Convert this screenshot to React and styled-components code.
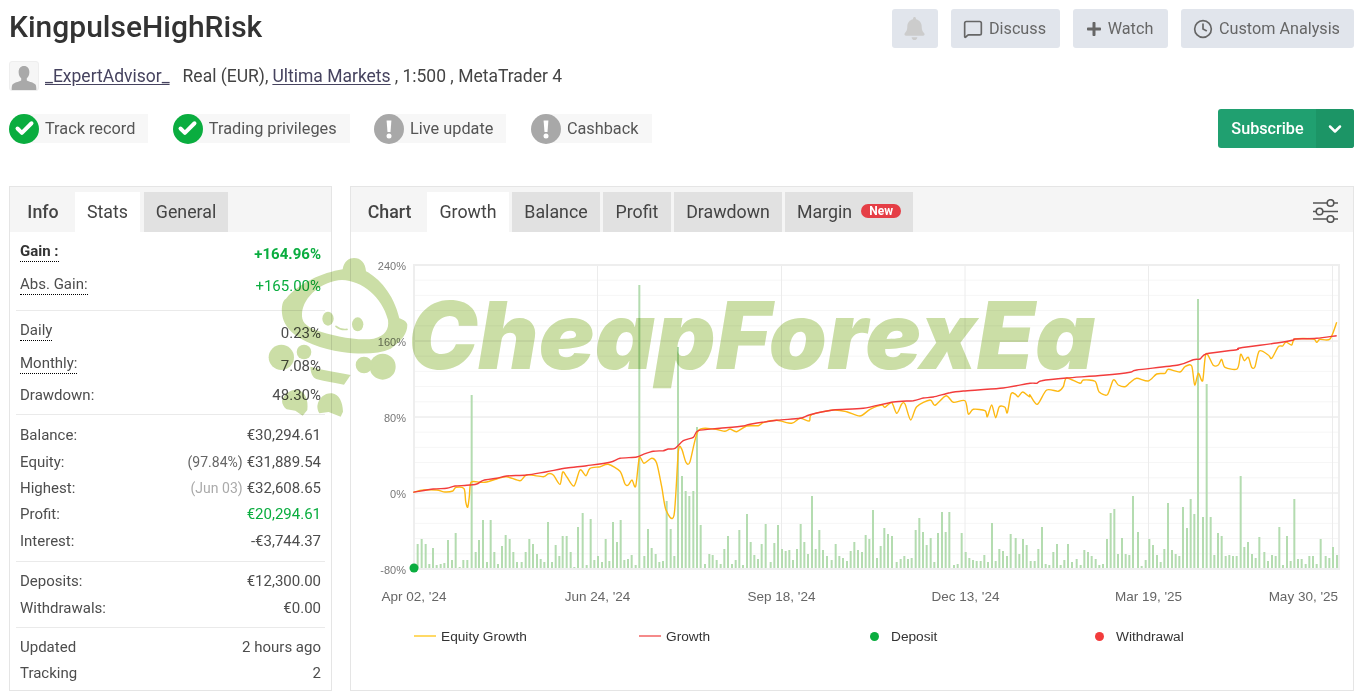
import React from 'react';
import styled, { createGlobalStyle } from 'styled-components';
import { MessageSquare, Clock, Check, ChevronDown } from 'lucide-react';
import { FaBell, FaPlus } from 'react-icons/fa';

const Global = createGlobalStyle`
  html, body { margin: 0; padding: 0; background: #fff; }
  body { font-family: Roboto, "Liberation Sans", sans-serif; color: #444; overflow: hidden; }
  * { box-sizing: border-box; }
`;

const Page = styled.div`
  position: relative;
  width: 1362px;
  height: 693px;
  padding: 9px 8px 0 9px;
  overflow: hidden;
`;
const TopRow = styled.div`
  display: flex;
  justify-content: space-between;
  align-items: flex-start;
  height: 39px;
`;
const Title = styled.h1`
  margin: 0;
  font-size: 30px;
  line-height: 36px;
  font-weight: 500;
  color: #333;
`;
const Actions = styled.div`
  display: flex;
  gap: 13px;
`;
const ActionButton = styled.button`
  display: flex;
  align-items: center;
  justify-content: center;
  gap: 6px;
  height: 39px;
  width: ${p => p.$w}px;
  border: 0;
  border-radius: 3px;
  background: #e1e5ec;
  color: #666;
  font: 400 16.2px Roboto, sans-serif;
  padding: 0 2px 0 0;
`;
const MetaRow = styled.div`
  display: flex;
  align-items: center;
  margin-top: 13px;
  height: 30px;
  font-size: 17.5px;
  color: #444;
`;
const Avatar = styled.div`
  width: 30px;
  height: 30px;
  border: 1px solid #eee;
  border-radius: 3px;
  background: #f6f6f6;
  margin-right: 6px;
  overflow: hidden;
`;
const UserLink = styled.a`
  color: #46435f;
  text-decoration: underline;
  text-underline-offset: 2px;
  margin-right: 13px;
`;
const BrokerLink = styled.a`
  color: #46435f;
  text-decoration: underline;
  text-underline-offset: 2px;
  margin: 0 4px;
`;
const BadgeRow = styled.div`
  display: flex;
  justify-content: space-between;
  align-items: center;
  margin-top: 18px;
  height: 39px;
`;
const Badges = styled.div`
  display: flex;
  gap: 24.5px;
`;
const Badge = styled.div`
  display: flex;
  align-items: center;
  gap: 6px;
  height: 29px;
  padding-right: 13px;
  font-size: 16.3px;
  color: #555;
  background: linear-gradient(to right, transparent 15px, #f7f7f7 15px);
`;
const BadgeIcon = styled.span`
  display: flex;
  align-items: center;
  justify-content: center;
  width: 30px;
  height: 30px;
  border-radius: 50%;
  background: ${p => (p.$ok ? '#0aad3f' : '#a8a8a8')};
  color: #fff;
`;
const Subscribe = styled.div`
  display: flex;
  width: 136px;
  height: 39px;
  border-radius: 3px;
  overflow: hidden;
  background: #20a070;
  color: #fff;
  font-size: 16.2px;
  font-weight: 500;
`;
const SubscribeLabel = styled.span`
  flex: 1;
  display: flex;
  align-items: center;
  justify-content: center;
  padding-left: 1px;
`;
const SubscribeCaret = styled.span`
  width: 38px;
  display: flex;
  align-items: center;
  justify-content: center;
  background: #1c9566;
`;
const Panels = styled.div`
  display: flex;
  gap: 18px;
  margin-top: 38px;
  height: 505px;
`;
const Panel = styled.section`
  width: ${p => (p.$w ? `${p.$w}px` : 'auto')};
  flex: ${p => (p.$w ? 'none' : 1)};
  border: 1px solid #e5e5e5;
  display: flex;
  flex-direction: column;
  min-width: 0;
`;
const TabBar = styled.div`
  display: flex;
  align-items: flex-end;
  height: 45px;
  flex: none;
  background: #f5f5f5;
`;
const TabLabel = styled.div`
  height: 40px;
  padding: 0 0 2px 1px;
  display: flex;
  align-items: center;
  justify-content: center;
  width: ${p => p.$w}px;
  font-size: 17.8px;
  font-weight: 500;
  color: #444;
`;
const Tab = styled.div`
  height: 40px;
  padding-bottom: 2px;
  display: flex;
  align-items: center;
  justify-content: center;
  width: ${p => p.$w}px;
  margin-right: ${p => p.$gap || 3}px;
  background: ${p => (p.$active ? '#fff' : '#e1e1e1')};
  font-size: 17.8px;
  color: #444;
`;
const NewTag = styled.span`
  margin-left: 9px;
  width: 40px;
  height: 14px;
  border-radius: 7px;
  background: #e53e46;
  color: #fff;
  font-size: 12px;
  font-weight: 700;
  line-height: 14px;
  text-align: center;
`;
const SettingsIcon = styled.span`
  margin-left: auto;
  margin-right: 14px;
  margin-bottom: 9px;
  display: flex;
`;
const StatGroup = styled.div`
  padding: ${p => p.$pad};
  margin: 0 6px;
  border-bottom: ${p => (p.$last ? 0 : '1px solid #eaeaea')};
`;
const Row = styled.div`
  display: flex;
  justify-content: space-between;
  align-items: center;
  height: ${p => p.$h}px;
  padding: 0 4px;
  font-size: 15px;
  color: #4d4d4d;
`;
const Hint = styled.span`
  border-bottom: ${p => (p.$dotted ? '1px dotted #000' : 0)};
  padding-bottom: ${p => (p.$dotted ? '1px' : 0)};
  margin-bottom: ${p => (p.$dotted ? '3.5px' : 0)};
  font-weight: ${p => (p.$bold ? 700 : 400)};
  color: ${p => (p.$bold ? '#333' : '#4d4d4d')};
`;
const Value = styled.span`
  color: ${p => (p.$green ? '#0aad3f' : '#4d4d4d')};
  font-weight: ${p => (p.$bold ? 700 : 400)};
`;
const Muted = styled.span`
  color: ${p => (p.$light ? '#aaa' : '#666')};
  font-size: 14px;
  margin-right: 4px;
`;
const ChartBody = styled.div`
  flex: 1;
`;
const ChartSvg = styled.svg`
  display: block;
  width: 1002px;
  height: 375px;
`;
const Legend = styled.div`
  display: grid;
  grid-template-columns: repeat(4, 225px);
  padding-left: 63px;
  margin-top: 19px;
`;
const LegendItem = styled.div`
  display: flex;
  align-items: center;
  height: 20px;
  font: 13.7px "Liberation Sans", Arial, sans-serif;
  color: #333;
`;
const LegendMark = styled.span`
  display: block;
  width: ${p => (p.$dot ? 9 : 22)}px;
  height: ${p => (p.$dot ? 9 : 2)}px;
  border-radius: ${p => (p.$dot ? '50%' : 0)};
  background: ${p => p.$c};
  margin-left: ${p => (p.$dot ? 6 : 0)}px;
  margin-right: ${p => (p.$dot ? 12 : 5)}px;
`;
const Watermark = styled.div`
  position: absolute;
  left: 0;
  top: 0;
  width: 1362px;
  height: 693px;
  pointer-events: none;
  mix-blend-mode: multiply;
`;
const WatermarkText = styled.span`
  position: absolute;
  left: 408px;
  top: 279px;
  font: italic 900 93px/112px Inter, "Open Sans", sans-serif;
  letter-spacing: 0.4px;
  color: #cbdea6;
  white-space: nowrap;
`;
const Mascot = styled.svg`
  position: absolute;
  left: 262px;
  top: 250px;
  width: 180px;
  height: 175px;
`;

const smooth = pts => {
  let d = `M${pts[0][0]},${pts[0][1]}`;
  const t = 0.14;
  for (let i = 0; i < pts.length - 1; i++) {
    const p0 = pts[i - 1] || pts[i];
    const p1 = pts[i];
    const p2 = pts[i + 1];
    const p3 = pts[i + 2] || p2;
    d += `C${(p1[0] + (p2[0] - p0[0]) * t).toFixed(1)},${(p1[1] + (p2[1] - p0[1]) * t).toFixed(1)} ${(p2[0] - (p3[0] - p1[0]) * t).toFixed(1)},${(p2[1] - (p3[1] - p1[1]) * t).toFixed(1)} ${p2[0].toFixed(1)},${p2[1].toFixed(1)}`;
  }
  return d;
};
const toPage = (ox, list) => list.map(([x, y]) => [ox + x / 3, 250 + y / 3]);

const redLine = [
  ...toPage(370, [[130,727],[190,717],[230,715],[255,708],[290,706],[320,702],[340,691],[380,685],[410,678],[470,675],[530,665],[590,654],[650,647],[720,637],[750,625],[800,621],[820,613],[850,604],[880,602],[895,597],[915,595],[940,572],[970,562],[985,542]]),
  ...toPage(700, [[60,535],[130,528],[150,523],[230,511],[300,505],[330,494],[400,480],[490,475],[580,456],[640,452],[670,444],[700,441],[750,428],[790,423],[900,415]]),
  ...toPage(1030, [[0,400],[20,400],[35,392],[110,384],[220,376],[300,367],[320,360],[445,345],[490,329],[510,327],[530,311],[620,299],[630,294],[740,279],[790,270],[795,267],[860,265],[920,257]]),
];
const orangeLine = [
  ...toPage(370, [[130,727],[160,720],[200,720],[225,726],[248,723],[258,712],[282,716],[287,755],[293,772],[298,740],[303,697],[330,697],[350,696],[380,687],[410,680],[450,692],[470,675],[520,680],[535,671],[550,675],[570,703],[578,666],[590,680],[612,708],[630,660],[648,677],[660,655],[690,650],[715,643],[750,664],[765,702],[775,705],[786,690],[797,709],[808,624],[822,640],[845,625],[860,640],[875,710],[888,780],[912,796],[925,605],[935,597],[948,637],[960,635],[985,542]]),
  ...toPage(700, [[40,537],[75,544],[90,537],[110,545],[140,528],[175,527],[190,518],[230,511],[275,520],[300,505],[328,513],[335,494],[400,480],[440,485],[480,498],[510,478],[545,465],[555,472],[575,458],[590,490],[605,462],[615,462],[632,510],[650,470],[690,450],[705,466],[738,437],[760,457],[795,452],[805,492],[820,478],[855,482],[862,500],[875,465],[887,503],[898,470],[915,472],[922,488],[933,432],[945,432],[955,440],[968,426],[988,440]]),
  ...toPage(1030, [[0,435],[22,463],[50,420],[85,424],[100,410],[110,384],[150,400],[160,390],[195,394],[207,425],[232,434],[250,390],[265,405],[285,410],[300,398],[320,385],[355,393],[380,372],[405,370],[415,358],[450,366],[465,350],[485,348],[494,405],[505,370],[518,392],[528,311],[550,346],[565,345],[575,328],[585,352],[622,356],[632,313],[643,332],[655,322],[665,352],[675,350],[688,303],[715,315],[725,325],[745,290],[758,288],[768,276],[785,285],[795,267],[850,267],[860,277],[870,268],[900,267],[920,217]]),
];

const barsA = [[143,24],[155,29],[167,24],[178,4],[189,20],[200,3],[212,4],[223,5],[234,28],[246,8],[257,35],[269,1],[280,8],[292,8],[305,173],[317,16],[327,28],[339,48],[351,6],[362,48],[373,16],[384,4],[396,22],[407,33],[419,29],[430,16],[441,6],[455,6],[467,16],[478,29],[489,24],[501,14],[512,9],[523,6],[534,46],[546,6],[557,23],[568,12],[578,32],[590,32],[602,16],[613,1],[624,41],[638,55],[650,3],[662,49],[673,8],[684,12],[696,6],[707,29],[718,7],[729,46],[741,26],[752,48],[763,8],[774,9],[785,13],[797,3],[808,283],[823,12],[834,39],[845,20],[857,14],[868,6],[879,7],[890,67],[902,39],[913,12],[924,221],[936,92],[947,77],[958,72],[970,77],[981,141],[992,43]];
const barsB = [[15,4],[28,14],[38,13],[50,8],[62,4],[73,19],[84,32],[96,4],[107,8],[118,38],[129,3],[141,54],[152,26],[163,13],[174,9],[185,24],[197,44],[212,6],[223,25],[234,43],[246,19],[257,17],[268,18],[279,8],[291,19],[302,44],[313,26],[324,14],[336,72],[347,19],[358,38],[369,18],[381,12],[395,8],[407,24],[418,12],[429,10],[441,7],[452,17],[463,26],[474,18],[486,16],[497,33],[508,29],[519,58],[531,10],[542,22],[553,40],[564,34],[576,32],[590,6],[602,9],[613,12],[624,9],[635,10],[647,38],[658,50],[669,36],[680,23],[692,30],[703,6],[714,35],[726,56],[737,36],[748,56],[762,3],[773,4],[785,35],[797,16],[808,10],[819,8],[830,7],[842,7],[853,13],[864,6],[876,45],[887,7],[898,19],[909,17],[921,12],[932,34],[947,30],[958,14],[969,29],[980,23]];
const barsC = [[2,7],[14,7],[25,19],[36,41],[47,4],[58,3],[70,16],[81,24],[92,3],[103,8],[114,24],[126,6],[140,9],[152,3],[163,18],[174,16],[185,12],[197,9],[208,3],[219,4],[231,29],[242,55],[253,59],[264,14],[276,30],[287,14],[298,13],[309,72],[324,36],[335,2],[347,8],[358,29],[369,23],[381,13],[392,6],[403,19],[414,65],[426,18],[437,14],[448,12],[459,61],[471,40],[482,69],[493,54],[504,269],[519,51],[530,184],[542,51],[553,13],[564,35],[575,32],[587,12],[598,13],[609,12],[620,12],[632,92],[643,21],[654,26],[666,14],[677,10],[688,31],[703,16],[714,7],[726,13],[737,12],[748,41],[759,3],[771,32],[782,7],[793,69],[804,9],[815,9],[827,4],[838,12],[849,12],[860,4],[872,29],[887,12],[898,10],[909,21],[921,13]];
const bars = [
  ...barsA.map(([x, h]) => [370 + x / 3, h]),
  ...barsB.map(([x, h]) => [700 + x / 3, h]),
  ...barsC.map(([x, h]) => [1030 + x / 3, h]),
];

const minor = Array.from({ length: 20 }, (_, i) => 265 + i * 15.2);
const major = [341, 417, 493];
const vertical = [597.5, 781.5, 965, 1148.5, 1332.5];
const yLabels = [['240%', 265], ['160%', 341], ['80%', 417], ['0%', 493], ['-80%', 569]];
const xLabels = [["Apr 02, '24", 414, 'middle'], ["Jun 24, '24", 597.5, 'middle'], ["Sep 18, '24", 781.5, 'middle'], ["Dec 13, '24", 965.5, 'middle'], ["Mar 19, '25", 1148.5, 'middle'], ["May 30, '25", 1338, 'end']];

const GrowthChart = () => (
  <ChartSvg viewBox="351 232 1002 375">
    {minor.map(y => <line key={y} x1="414" x2="1339" y1={y} y2={y} stroke="#f6f6f6" strokeWidth="1" />)}
    {major.map(y => <line key={y} x1="414" x2="1339" y1={y} y2={y} stroke="#e8e8e8" strokeWidth="1" />)}
    {vertical.map(x => <line key={x} x1={x} x2={x} y1="265" y2="569" stroke="#ececec" strokeWidth="1" />)}
    <rect x="414" y="265" width="925" height="304" fill="none" stroke="#eee" strokeWidth="2" />
    {bars.map(([x, h], i) => <rect key={i} x={x - 1} y={568 - h} width="2" height={h} fill="#b4dcb0" />)}
    <path d={smooth(orangeLine)} fill="none" stroke="#fdb913" strokeWidth="1.4" strokeLinejoin="round" />
    <path d={smooth(redLine)} fill="none" stroke="#f23c3c" strokeWidth="1.4" strokeLinejoin="round" />
    <circle cx="414" cy="568" r="4.5" fill="#0aad3f" />
    {yLabels.map(([t, y]) => (
      <text key={t} x="406" y={y + 5} textAnchor="end" fontFamily="Liberation Sans, Arial, sans-serif" fontSize="11" fill="#777">{t}</text>
    ))}
    {xLabels.map(([t, x, a]) => (
      <text key={t} x={x} y="601" textAnchor={a} fontFamily="Liberation Sans, Arial, sans-serif" fontSize="13.5" fill="#666">{t}</text>
    ))}
  </ChartSvg>
);

const CheckBadge = ({ children }) => (
  <Badge>
    <BadgeIcon $ok><Check size={21} strokeWidth={4.5} /></BadgeIcon>
    {children}
  </Badge>
);
const WarnBadge = ({ children }) => (
  <Badge>
    <BadgeIcon>
      <svg width="30" height="30" viewBox="0 0 30 30"><path d="M12.6 6.5h4.8l-.9 11.5h-3z" fill="#fff" /><circle cx="15" cy="22" r="2.5" fill="#fff" /></svg>
    </BadgeIcon>
    {children}
  </Badge>
);

export default function App() {
  return (
    <Page>
      <Global />
      <TopRow>
        <Title>KingpulseHighRisk</Title>
        <Actions>
          <ActionButton $w={46}><FaBell size={23} color="#ccc" /></ActionButton>
          <ActionButton $w={109}><MessageSquare size={20} strokeWidth={2} color="#666" />Discuss</ActionButton>
          <ActionButton $w={95}><FaPlus size={16} color="#666" />Watch</ActionButton>
          <ActionButton $w={173}><Clock size={20} strokeWidth={2} color="#666" />Custom Analysis</ActionButton>
        </Actions>
      </TopRow>
      <MetaRow>
        <Avatar>
          <svg width="28" height="28" viewBox="2 1.500 24 24"><path d="M14 5c3 0 4.600 2.200 4.600 5.200 0 2.400-1 4.300-2.200 5.300v1.800c2.400 1.100 6.300 1.900 7.600 3.700.5.800.6 3 .6 5H3.400c0-2 .1-4.200.6-5 1.300-1.800 5.200-2.600 7.600-3.700v-1.800c-1.200-1-2.200-2.900-2.200-5.300C9.400 7.200 11 5 14 5z" fill="#a9a9a9" /></svg>
        </Avatar>
        <UserLink>_ExpertAdvisor_</UserLink>
        Real (EUR),<BrokerLink>Ultima Markets</BrokerLink>, 1:500 , MetaTrader 4
      </MetaRow>
      <BadgeRow>
        <Badges>
          <CheckBadge>Track record</CheckBadge>
          <CheckBadge>Trading privileges</CheckBadge>
          <WarnBadge>Live update</WarnBadge>
          <WarnBadge>Cashback</WarnBadge>
        </Badges>
        <Subscribe>
          <SubscribeLabel>Subscribe</SubscribeLabel>
          <SubscribeCaret><ChevronDown size={20} strokeWidth={3} /></SubscribeCaret>
        </Subscribe>
      </BadgeRow>
      <Panels>
        <Panel $w={323}>
          <TabBar>
            <TabLabel $w={65}>Info</TabLabel>
            <Tab $w={65} $active $gap={4}>Stats</Tab>
            <Tab $w={84}>General</Tab>
          </TabBar>
          <StatGroup $pad="5.500px 0 7.500px">
            <Row $h={32.5}><Hint $dotted $bold>Gain :</Hint><Value $green $bold>+164.96%</Value></Row>
            <Row $h={32.5}><Hint $dotted>Abs. Gain:</Hint><Value $green>+165.00%</Value></Row>
          </StatGroup>
          <StatGroup $pad="5px 0 6px">
            <Row $h={33}><Hint $dotted>Daily</Hint><Value>0.23%</Value></Row>
            <Row $h={33}><Hint $dotted>Monthly:</Hint><Value>7.08%</Value></Row>
            <Row $h={26}><Hint>Drawdown:</Hint><Value>48.30%</Value></Row>
          </StatGroup>
          <StatGroup $pad="7px 0">
            <Row $h={26.4}><Hint>Balance:</Hint><Value>€30,294.61</Value></Row>
            <Row $h={26.4}><Hint>Equity:</Hint><Value><Muted>(97.84%)</Muted>€31,889.54</Value></Row>
            <Row $h={26.4}><Hint>Highest:</Hint><Value><Muted $light>(Jun 03)</Muted>€32,608.65</Value></Row>
            <Row $h={26.4}><Hint>Profit:</Hint><Value $green>€20,294.61</Value></Row>
            <Row $h={26.4}><Hint>Interest:</Hint><Value>-€3,744.37</Value></Row>
          </StatGroup>
          <StatGroup $pad="6px 0">
            <Row $h={26.4}><Hint>Deposits:</Hint><Value>€12,300.00</Value></Row>
            <Row $h={26.4}><Hint>Withdrawals:</Hint><Value>€0.00</Value></Row>
          </StatGroup>
          <StatGroup $pad="6px 0" $last>
            <Row $h={26.4}><Hint>Updated</Hint><Value>2 hours ago</Value></Row>
            <Row $h={26.4}><Hint>Tracking</Hint><Value>2</Value></Row>
          </StatGroup>
        </Panel>
        <Panel>
          <TabBar>
            <TabLabel $w={76}>Chart</TabLabel>
            <Tab $w={82} $active>Growth</Tab>
            <Tab $w={88}>Balance</Tab>
            <Tab $w={68}>Profit</Tab>
            <Tab $w={108}>Drawdown</Tab>
            <Tab $w={128}>Margin<NewTag>New</NewTag></Tab>
            <SettingsIcon>
              <svg width="27" height="24" viewBox="0 0 27 24" fill="none" stroke="#555" strokeWidth="1.6">
                <path d="M1 4h25M1 12.500h25M1 20h25" />
                <circle cx="18.500" cy="4" r="3.300" fill="#f5f5f5" />
                <circle cx="7.500" cy="12.500" r="3.300" fill="#f5f5f5" />
                <circle cx="18.500" cy="20" r="3.300" fill="#f5f5f5" />
              </svg>
            </SettingsIcon>
          </TabBar>
          <ChartBody>
            <GrowthChart />
            <Legend>
              <LegendItem><LegendMark $c="#ffd966" />Equity Growth</LegendItem>
              <LegendItem><LegendMark $c="#f58a8a" />Growth</LegendItem>
              <LegendItem><LegendMark $dot $c="#0aad3f" />Deposit</LegendItem>
              <LegendItem><LegendMark $dot $c="#f23c3c" />Withdrawal</LegendItem>
            </Legend>
          </ChartBody>
        </Panel>
      </Panels>
      <Watermark>
        <WatermarkText>CheapForexEa</WatermarkText>
        <Mascot viewBox="0 0 540 525">
          <g fill="#cbdea6">
            <path fillRule="evenodd" d="M242 58C246 32 262 24 276 24C296 24 310 38 312 64C350 84 394 130 412 205C424 210 434 214 436 224C436 250 420 272 386 296C350 312 300 314 240 306C180 296 120 276 88 245C70 228 62 210 60 190C58 170 62 150 72 146C110 100 180 68 242 58ZM120 190C124 140 180 92 240 90C300 92 360 140 378 210C382 240 368 258 335 266C290 274 210 258 160 240C130 228 118 215 120 190Z" />
            <circle cx="58" cy="322" r="38" />
            <circle cx="362" cy="350" r="39" />
            <circle cx="126" cy="306" r="22" />
            <circle cx="306" cy="345" r="25" />
            <path d="M145 350C190 362 230 368 266 375L246 404C215 398 190 394 165 388C150 382 146 368 145 350Z" />
            <path d="M60 452C66 430 90 416 110 420C130 428 140 450 136 480L122 497L100 482L74 478C66 472 60 462 60 452Z" />
            <path d="M166 468C170 442 190 428 210 430C232 434 242 456 243 485L236 500L200 486L172 490C168 484 166 476 166 468Z" />
            <ellipse cx="198" cy="206" rx="17" ry="21" />
            <ellipse cx="287" cy="223" rx="17" ry="21" />
          </g>
          <path d="M222 229Q236 241 255 238" fill="none" stroke="#cbdea6" strokeWidth="5" strokeLinecap="round" />
        </Mascot>
      </Watermark>
    </Page>
  );
}
